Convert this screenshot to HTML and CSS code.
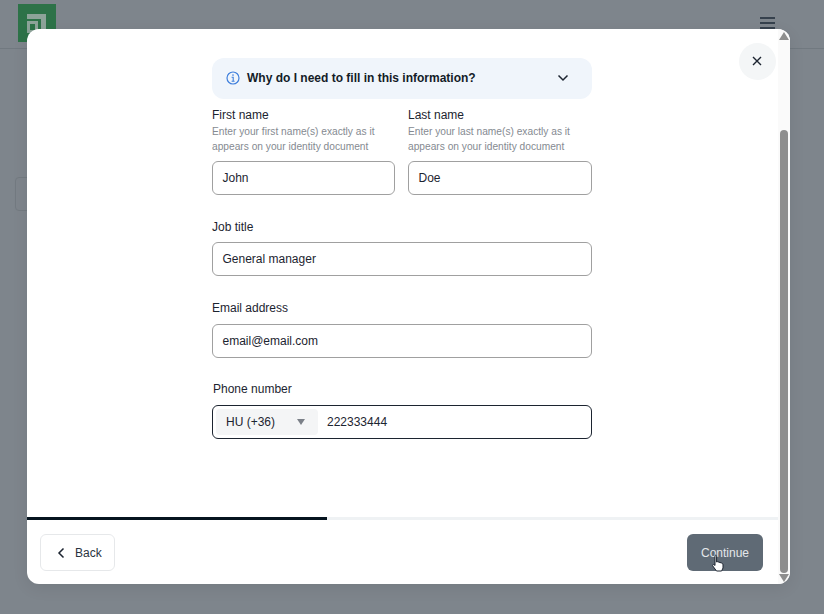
FILE: index.html
```html
<!DOCTYPE html>
<html lang="en">
<head>
<meta charset="utf-8">
<title>Personal details</title>
<link rel="stylesheet" href="styles.css">
</head>
<body>
<header class="topbar">
  <svg class="logo" width="38" height="38" viewBox="0 0 38 38"><rect width="38" height="38" fill="#2d7248"/><path d="M9 10h19v27h-5V15H9z" fill="#8da399"/><path d="M9 17h11v12h-11zM12 20v6h5v-6z" fill="#8da399" fill-rule="evenodd"/></svg>
  <div class="burger"><span></span><span></span><span></span></div>
</header>
<div class="ghost-box"></div>
<section class="modal">
  <div class="main">
    <button class="close" aria-label="Close"><svg width="10" height="10" viewBox="0 0 10 10"><path d="M1 1l8 8M9 1l-8 8" stroke="#1c2430" stroke-width="1.4" fill="none"/></svg></button>
    <div class="content">
      <div class="info">
        <svg class="info-icon" width="14" height="14" viewBox="0 0 14 14"><circle cx="7" cy="7" r="6" fill="none" stroke="#3f7fdc" stroke-width="1.2"/><path d="M5.6 6.3H7.2V10M5.6 10.2H8.6" fill="none" stroke="#3f7fdc" stroke-width="1.1"/><circle cx="7" cy="4.1" r=".8" fill="#3f7fdc"/></svg>
        <span class="info-text">Why do I need to fill in this information?</span>
        <svg width="12" height="8" viewBox="0 0 12 8"><path d="M1.5 1.5L6 6l4.5-4.5" fill="none" stroke="#1c2430" stroke-width="1.5"/></svg>
      </div>
      <div class="name-row">
        <div class="field">
          <div class="label">First name</div>
          <div class="help">Enter your first name(s) exactly as it appears on your identity document</div>
          <div class="input">John</div>
        </div>
        <div class="field">
          <div class="label">Last name</div>
          <div class="help">Enter your last name(s) exactly as it appears on your identity document</div>
          <div class="input">Doe</div>
        </div>
      </div>
      <div class="field spaced">
        <div class="label label-gap">Job title</div>
        <div class="input">General manager</div>
      </div>
      <div class="field spaced">
        <div class="label label-gap-wide">Email address</div>
        <div class="input">email@email.com</div>
      </div>
      <div class="field spaced-tight">
        <div class="label label-gap-wide label-phone">Phone number</div>
        <div class="input phone">
          <div class="country"><span>HU (+36)</span><svg width="8" height="6" viewBox="0 0 8 6"><path d="M0 0h8L4 6z" fill="#7b8088"/></svg></div>
          <span class="phone-num">222333444</span>
        </div>
      </div>
    </div>
    <div class="progress"><div class="progress-fill"></div></div>
    <footer class="actions">
      <button class="back"><svg width="8" height="12" viewBox="0 0 8 12"><path d="M6.5 1.500L2 6l4.500 4.500" fill="none" stroke="#1c2430" stroke-width="1.5"/></svg>Back</button>
      <button class="continue">Continue</button>
    </footer>
    <svg class="cursor" width="14" height="18" viewBox="0 0 14 18"><path d="M4 1.500c.7-.6 1.600-.2 1.600.8V8l1-.3 4.200 1.400c.8.3 1.200.9 1.200 1.700V14l-1.400 3H5.500L1.800 12c-.6-.9.300-1.900 1.300-1.300L4 11.500z" fill="#fff" stroke="#1c2430" stroke-width="1"/></svg>
  </div>
  <div class="scrollbar">
    <svg width="10" height="8" viewBox="0 0 10 8"><path d="M5 0l5 8H0z" fill="#8e8e8e"/></svg>
    <div class="track"><div class="thumb"></div></div>
    <svg width="10" height="8" viewBox="0 0 10 8"><path d="M0 0h10L5 8z" fill="#8e8e8e"/></svg>
  </div>
</section>
</body>
</html>
```
FILE: styles.css
```css
* { box-sizing: border-box; }
html, body { height: 100%; }
body {
  margin: 0;
  height: 614px;
  overflow: hidden;
  background: #7e858c;
  font-family: "Liberation Sans", Arial, sans-serif;
  color: #1c2430;
}
.topbar {
  height: 49px;
  display: flex;
  align-items: flex-start;
  justify-content: space-between;
  padding: 4px 49px 0 18px;
  border-bottom: 1px solid #717980;
}
.logo { display: block; }
.burger {
  width: 15px;
  margin-top: 13px;
  display: flex;
  flex-direction: column;
  gap: 3px;
}
.burger span { height: 2px; background: #36414d; }
.ghost-box {
  position: absolute;
  left: 15px;
  top: 177px;
  width: 40px;
  height: 34px;
  border: 1px solid #737a81;
  border-radius: 4px;
}
.modal {
  position: absolute;
  left: 27px;
  top: 29px;
  width: 763px;
  height: 555px;
  background: #fff;
  border-radius: 12px;
  display: flex;
  overflow: hidden;
  box-shadow: 0 4px 16px rgba(0, 0, 0, .08);
}
.main {
  position: relative;
  width: 751px;
  display: flex;
  flex-direction: column;
}
.close {
  position: absolute;
  left: 712px;
  top: 14px;
  width: 37px;
  height: 37px;
  border: 0;
  border-radius: 50%;
  background: #f4f6f7;
  display: flex;
  align-items: center;
  justify-content: center;
  padding: 0 1px 1px 0;
}
.content {
  width: 380px;
  margin: 29px 0 0 185px;
  height: 459px;
}
.info {
  height: 41px;
  border-radius: 12px;
  background: #f0f5fb;
  display: flex;
  align-items: center;
  padding: 0 23px 1px 14px;
}
.info-text {
  flex: 1;
  margin-left: 7px;
  font-size: 12px;
  font-weight: 700;
  color: #141c28;
}
.name-row {
  display: grid;
  grid-template-columns: 183px 184px;
  gap: 13px;
  margin-top: 9px;
}
.label {
  font-size: 12px;
  line-height: 15px;
  color: #1c2430;
}
.label-gap { margin-bottom: 7px; }
.label-gap-wide { margin-bottom: 8px; }
.label-phone { margin-left: 1px; }
.help {
  margin-top: 1px;
  font-size: 10.200px;
  line-height: 15px;
  color: #858a91;
}
.input {
  height: 34px;
  margin-top: 7px;
  padding: 0 9.500px;
  display: flex;
  align-items: center;
  border: 1px solid #a0a0a0;
  border-radius: 6px;
  font-size: 12px;
  color: #1c2430;
}
.label-gap + .input, .label-gap-wide + .input { margin-top: 0; }
.spaced { margin-top: 25px; }
.spaced-tight { margin-top: 24px; }
.phone {
  border-color: #1c2430;
  padding: 0 3px;
}
.country {
  width: 102px;
  height: 26px;
  border-radius: 4px;
  background: #f4f5f6;
  display: flex;
  align-items: center;
  justify-content: space-between;
  padding: 0 13px 0 10px;
}
.phone-num { margin-left: 9px; }
.progress {
  height: 3px;
  background: #eff2f4;
}
.progress-fill {
  width: 300px;
  height: 3px;
  background: #06141f;
}
.actions {
  flex: 1;
  display: flex;
  align-items: flex-start;
  justify-content: space-between;
  padding: 14px 15px 0 13px;
}
.back, .continue {
  height: 37px;
  border-radius: 6px;
  font-family: inherit;
  font-size: 12px;
}
.back {
  width: 75px;
  border: 1px solid #e6e8ea;
  background: #fff;
  color: #2a3440;
  display: flex;
  align-items: center;
  gap: 10px;
  padding: 0 0 0 16px;
}
.continue {
  width: 76px;
  border: 0;
  background: #5f6a75;
  color: #e4e7ea;
}
.cursor {
  position: absolute;
  left: 684px;
  top: 525px;
}
.scrollbar {
  width: 12px;
  display: flex;
  flex-direction: column;
  align-items: center;
  padding: 3px 0 2px;
  background: #fafafa;
}
.track {
  flex: 1;
  width: 100%;
  padding: 90px 2px 1px;
}
.thumb {
  height: 100%;
  border-radius: 4px;
  background: #8e8e8e;
}
```
